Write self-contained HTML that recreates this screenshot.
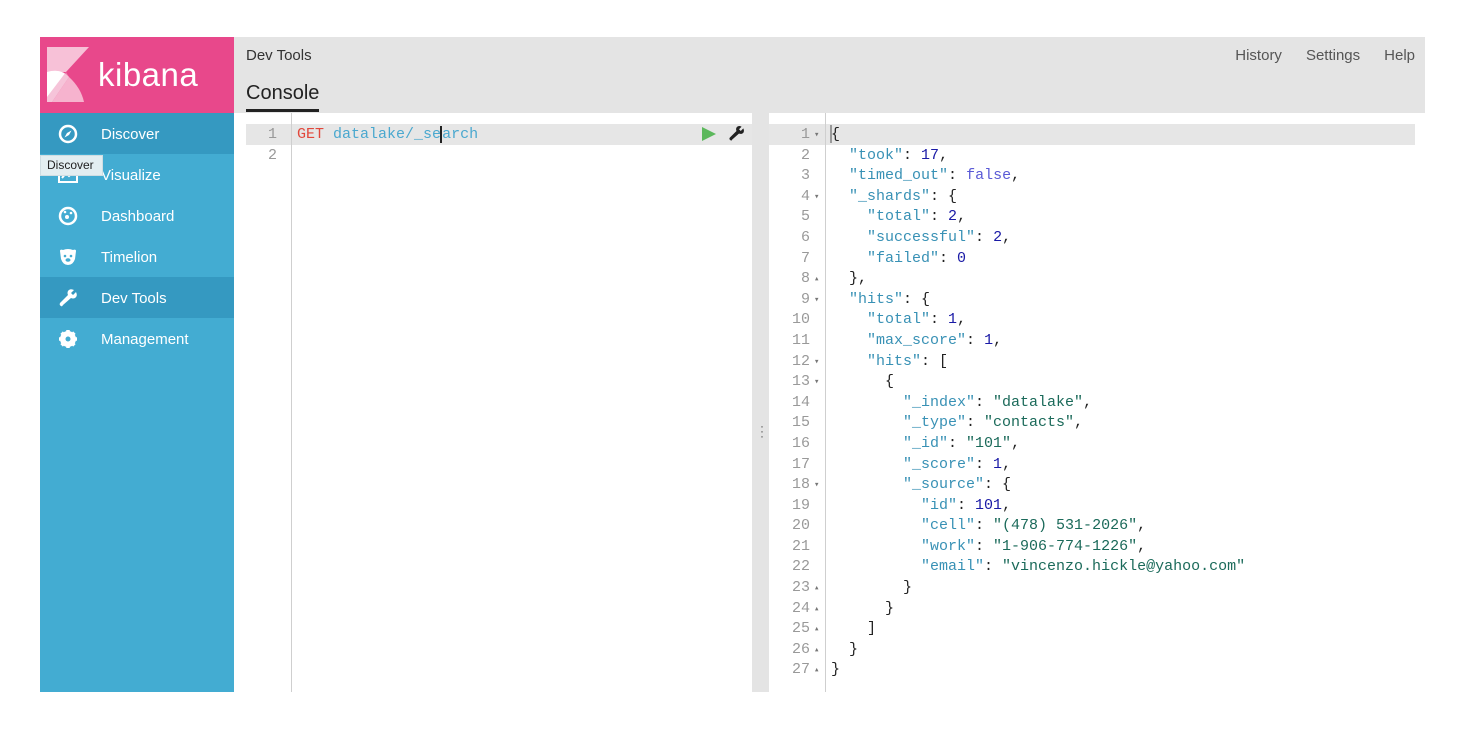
<!DOCTYPE html>
<html><head><meta charset="utf-8"><style>
*{margin:0;padding:0;box-sizing:border-box}
body{width:1465px;height:732px;background:#fff;position:relative;font-family:"Liberation Sans",sans-serif;overflow:hidden}
.abs{position:absolute}
#side{left:40px;top:37px;width:194px;height:655px;background:#43acd2}
#logo{left:0;top:0;width:194px;height:76px;background:#e8488b}
.nav{position:absolute;left:0;width:194px;height:41px;color:#fff;font-size:15px;line-height:43px;padding-left:61px}
.nav.sel{background:#3599c1}
.nav svg{position:absolute;left:18px;top:11px}
#hdr{left:234px;top:37px;width:1191px;height:76px;background:#e4e4e4}
.mono{font-family:"Liberation Mono","DejaVu Sans Mono",monospace;font-size:15px;line-height:20.6px;white-space:pre}
.ln{position:absolute;color:#999;text-align:right}
</style></head><body>
<div id="side" class="abs">
 <div id="logo" class="abs">
  <svg class="abs" style="left:7px;top:10px" width="43" height="56" viewBox="0 0 43 56">
   <polygon points="0,0 42,0 19,25 0,25" fill="#f7c1d7"/>
   <path d="M0,25 Q14,21 22,30 L5,55 L0,55 Z" fill="#fff"/>
   <path d="M22,30 Q34,41 37,55 L5,55 Z" fill="#f6b3ce"/>
   <path d="M19,25 L22,30 L5,55 L0,55 L0,50 Z" fill="#f09cbf" opacity=".6"/>
  </svg>
  <div class="abs" style="left:58px;top:19px;color:#fff;font-size:33px;letter-spacing:0.5px">kibana</div>
 </div>
 <div class="nav sel" style="top:76px"><svg width="20" height="20" viewBox="0 0 20 20"><circle cx="10" cy="10" r="8" fill="none" stroke="#fff" stroke-width="2.5"/><path d="M13.5 6.5 L11 11 L6.5 13.5 L9 9 Z" fill="#fff"/></svg>Discover</div>
 <div class="nav" style="top:117px"><svg width="20" height="20" viewBox="0 0 20 20"><rect x="1" y="3" width="18" height="14" fill="none" stroke="#fff" stroke-width="2"/><path d="M4 13 L8 8 L11 11 L16 6" stroke="#fff" stroke-width="2" fill="none"/></svg>Visualize</div>
 <div class="nav" style="top:158px"><svg width="20" height="20" viewBox="0 0 20 20"><circle cx="10" cy="10" r="8" fill="none" stroke="#fff" stroke-width="2.5"/><circle cx="9" cy="11" r="2" fill="#fff"/><circle cx="7" cy="6" r="1.3" fill="#fff"/><circle cx="13" cy="7" r="1.3" fill="#fff"/></svg>Dashboard</div>
 <div class="nav" style="top:199px"><svg width="20" height="20" viewBox="0 0 20 20"><path d="M2 4 Q2 2 5 3 Q10 1 15 3 Q18 2 18 4 L17 12 Q15 18 10 18 Q5 18 3 12 Z" fill="#fff"/><circle cx="7" cy="9" r="1.3" fill="#43acd2"/><circle cx="13" cy="9" r="1.3" fill="#43acd2"/><ellipse cx="10" cy="13" rx="2.5" ry="1.8" fill="#43acd2"/></svg>Timelion</div>
 <div class="nav sel" style="top:240px"><svg width="20" height="20" viewBox="0 0 20 20"><path d="M18 4 L15 7 L13 5 L16 2 Q12 0 10 3 Q9 5 10 7 L2 15 Q1 17 3 18 Q4 19 5 17 L13 10 Q15 11 17 10 Q20 8 18 4 Z" fill="#fff"/></svg>Dev Tools</div>
 <div class="nav" style="top:281px"><svg width="20" height="20" viewBox="0 0 20 20"><circle cx="10" cy="10" r="6" fill="none" stroke="#fff" stroke-width="4"/><g stroke="#fff" stroke-width="3.5"><line x1="10" y1="1" x2="10" y2="19"/><line x1="1" y1="10" x2="19" y2="10"/><line x1="3.6" y1="3.6" x2="16.4" y2="16.4"/><line x1="16.4" y1="3.6" x2="3.6" y2="16.4"/></g><circle cx="10" cy="10" r="2.5" fill="#43acd2"/></svg>Management</div>
</div>
<div class="abs" style="left:40px;top:155px;width:63px;height:21px;background:#e3eef1;border:1px solid #cfdde2;font-size:12px;line-height:19px;padding-left:6px;color:#222">Discover</div>

<div id="hdr" class="abs">
 <div class="abs" style="left:12px;top:10px;font-size:15px;color:#333">Dev Tools</div>
 <div class="abs" style="left:12px;top:45px;font-size:20px;color:#222">Console</div>
 <div class="abs" style="left:12px;top:72px;width:73px;height:3px;background:#222"></div>
 <div class="abs" style="right:10px;top:10px;font-size:15px;color:#555">
  <span style="margin-right:24px">History</span><span style="margin-right:24px">Settings</span><span>Help</span></div>
</div>

<!-- left editor -->
<div class="abs" style="left:246px;top:124px;width:506px;height:20.6px;background:#e6e6e6"></div>
<div class="abs" style="left:291px;top:113px;width:1px;height:579px;background:#cfcfcf"></div>
<div class="mono ln" style="left:246px;top:125px;width:31px">1
2</div>
<div class="mono abs" style="left:297px;top:125px"><span style="color:#e2473b">GET</span> <span style="color:#4aa8cf">datalake/_se</span><span style="border-left:2px solid #222;margin-left:-1px;color:#4aa8cf">arch</span></div>
<svg class="abs" style="left:701px;top:126px" width="16" height="16" viewBox="0 0 16 16"><path d="M1 1 L15 8 L1 15 Z" fill="#5cb85c"/></svg>
<svg class="abs" style="left:728px;top:125px" width="17" height="17" viewBox="0 0 20 20"><path d="M18 4 L15 7 L13 5 L16 2 Q12 0 10 3 Q9 5 10 7 L2 15 Q1 17 3 18 Q4 19 5 17 L13 10 Q15 11 17 10 Q20 8 18 4 Z" fill="#222"/></svg>

<!-- divider -->
<div class="abs" style="left:752px;top:113px;width:17px;height:579px;background:#e4e4e4"></div>
<div class="abs" style="left:760px;top:424px;font-size:12px;line-height:5px;color:#555">·<br>·<br>·</div>

<!-- right output -->
<div class="abs" style="left:769px;top:124px;width:646px;height:20.6px;background:#e6e6e6"></div>
<div class="abs" style="left:825px;top:113px;width:1px;height:579px;background:#cfcfcf"></div>
<div class="abs" style="left:830px;top:125px;width:2px;height:18px;background:#999"></div>
<div class="mono ln" style="left:769px;top:125px;width:41px">1
2
3
4
5
6
7
8
9
10
11
12
13
14
15
16
17
18
19
20
21
22
23
24
25
26
27</div>
<div class="mono abs" style="left:814px;top:125px;color:#777;font-size:9px;line-height:20.6px">▾


▾



▴
▾


▾
▾




▾




▴
▴
▴
▴
▴</div>
<div class="mono abs" style="left:831px;top:125px;color:#222"><span>{</span>
  <k>"took"</k>: <n>17</n>,
  <k>"timed_out"</k>: <b>false</b>,
  <k>"_shards"</k>: {
    <k>"total"</k>: <n>2</n>,
    <k>"successful"</k>: <n>2</n>,
    <k>"failed"</k>: <n>0</n>
  },
  <k>"hits"</k>: {
    <k>"total"</k>: <n>1</n>,
    <k>"max_score"</k>: <n>1</n>,
    <k>"hits"</k>: [
      {
        <k>"_index"</k>: <s>"datalake"</s>,
        <k>"_type"</k>: <s>"contacts"</s>,
        <k>"_id"</k>: <s>"101"</s>,
        <k>"_score"</k>: <n>1</n>,
        <k>"_source"</k>: {
          <k>"id"</k>: <n>101</n>,
          <k>"cell"</k>: <s>"(478) 531-2026"</s>,
          <k>"work"</k>: <s>"1-906-774-1226"</s>,
          <k>"email"</k>: <s>"vincenzo.hickle@yahoo.com"</s>
        }
      }
    ]
  }
}</div>
<style>k{color:#3891b5}n{color:#1a1aa6}b{color:#5a5ad6;font-weight:normal}s{color:#1b6a5a;text-decoration:none}</style>
</body></html>
